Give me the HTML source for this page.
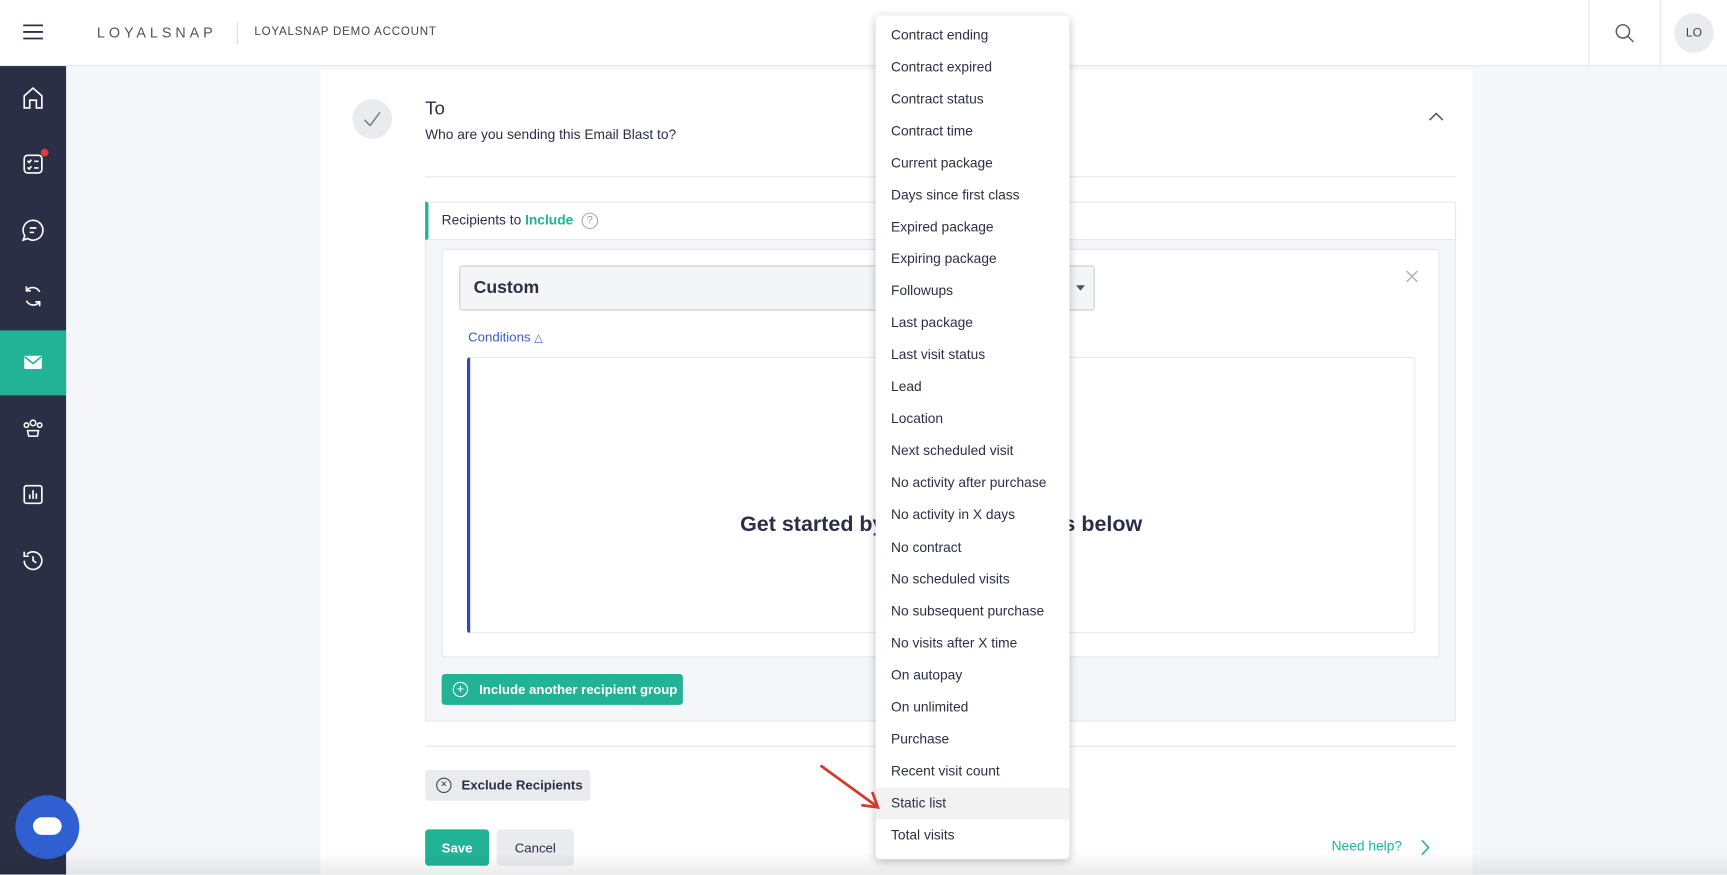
<!DOCTYPE html>
<html><head><meta charset="utf-8"><style>
*{box-sizing:border-box;margin:0;padding:0}
html,body{width:1727px;height:875px;overflow:hidden;background:#f4f6f9}
#w{position:absolute;left:0;top:0;width:1568px;height:794px;transform:scale(1.10140);transform-origin:0 0;font-family:"Liberation Sans",sans-serif;color:#2b2f45;background:#f4f6f9}
.a{position:absolute}
.hdr{left:0;top:0;width:1568px;height:60px;background:#fff;border-bottom:1px solid #e3e6ec}
.side{left:0;top:60px;width:60px;height:734px;background:#2b2f45}
.ic{position:absolute;left:18px;width:24px;height:24px}
.card{left:291px;top:63px;width:1046px;height:731px;background:#fff}
.dd{left:795px;top:14px;width:176px;height:766px;background:#fff;border-radius:4px;box-shadow:0 2px 8px rgba(0,0,0,.25);padding-top:4px}
.dd div{height:29.04px;line-height:29px;padding-left:14px;font-size:12.5px;color:#2b2f45}
.btn{border-radius:3px;font-size:12px;font-weight:bold;display:flex;align-items:center}
</style></head><body><div id="w">
<div class="a hdr">
 <svg class="a" style="left:21px;top:22px" width="18" height="14"><path d="M0 1H18M0 7H18M0 13H18" stroke="#2b2f45" stroke-width="1.6"/></svg>
 <div class="a" style="left:88px;top:22px;font-size:13px;letter-spacing:3.6px;color:#555">LOYALSNAP</div>
 <div class="a" style="left:215px;top:20px;width:1px;height:20px;background:#ddd"></div>
 <div class="a" style="left:231px;top:23px;font-size:10.5px;letter-spacing:0.7px;color:#444">LOYALSNAP DEMO ACCOUNT</div>
 <div class="a" style="left:1442px;top:0;width:1px;height:60px;background:#e6e6e6"></div>
 <svg class="a" style="left:1466px;top:21px" width="18" height="18"><circle cx="7.5" cy="7.5" r="6" fill="none" stroke="#555" stroke-width="1.3"/><path d="M12 12L17 17" stroke="#555" stroke-width="1.3"/></svg>
 <div class="a" style="left:1507px;top:0;width:1px;height:60px;background:#e6e6e6"></div>
 <div class="a" style="left:1520px;top:12px;width:36px;height:36px;border-radius:50%;background:#e9ebee;font-size:11px;line-height:36px;text-align:center;color:#444">LO</div>
</div>
<div class="a side">
 <svg class="ic" style="top:17px" viewBox="0 0 24 24" fill="none" stroke="#fff" stroke-width="1.5"><path d="M4 10L12 3L20 10V21H15V14H9V21H4Z"/></svg>
 <svg class="ic" style="top:77px" viewBox="0 0 24 24" fill="none" stroke="#fff" stroke-width="1.5"><rect x="4" y="4" width="16" height="16" rx="3"/><path d="M7 9L8.5 10.5L10.5 8M13 9.5H17M7 15L8.5 16.5L10.5 14M13 15.5H17"/></svg>
 <div class="a" style="left:37px;top:75px;width:7px;height:7px;border-radius:50%;background:#e03a3a"></div>
 <svg class="ic" style="top:137px" viewBox="0 0 24 24" fill="none" stroke="#fff" stroke-width="1.5"><path d="M12 3A9 9 0 1 1 7 19.5L3 21L4.5 17A9 9 0 0 1 12 3Z"/><path d="M9 10H15M9 14H13"/></svg>
 <svg class="ic" style="top:197px" viewBox="0 0 24 24" fill="none" stroke="#fff" stroke-width="1.5"><path d="M18 8A7 7 0 0 0 6 7M6 16A7 7 0 0 0 18 17M6 3V7H10M18 21V17H14"/></svg>
 <div class="a" style="left:0;top:240px;width:60px;height:59px;background:#22b396"></div>
 <svg class="ic" style="top:257px" viewBox="0 0 24 24"><rect x="4" y="6" width="16" height="12" rx="1.5" fill="#fff"/><path d="M4.5 7L12 13L19.5 7" stroke="#22b396" stroke-width="1.5" fill="none"/></svg>
 <svg class="ic" style="top:317px" viewBox="0 0 24 24" fill="none" stroke="#fff" stroke-width="1.4"><circle cx="12" cy="7" r="2.5"/><circle cx="6" cy="9" r="2"/><circle cx="18" cy="9" r="2"/><path d="M7 14H17L16 19H8Z"/></svg>
 <svg class="ic" style="top:377px" viewBox="0 0 24 24" fill="none" stroke="#fff" stroke-width="1.5"><rect x="4" y="4" width="16" height="16" rx="2"/><path d="M9 16V12M12 16V8M15 16V11"/></svg>
 <svg class="ic" style="top:437px" viewBox="0 0 24 24" fill="none" stroke="#fff" stroke-width="1.5"><path d="M4 12A8 8 0 1 0 6.5 6.2M4 4V8H8M12 8V12L15 14"/></svg>
</div>
<div class="a" style="left:14px;top:722px;width:58px;height:58px;border-radius:50%;background:#2f5fd0"><div class="a" style="left:16px;top:20px;width:26px;height:16px;border-radius:8px;background:#fff"></div></div>
<div class="a card">
 <div class="a" style="left:29px;top:27px;width:36px;height:36px;border-radius:50%;background:#e9ebee"></div>
 <svg class="a" style="left:38px;top:37px" width="18" height="16"><path d="M2 9L7 14L16 2" stroke="#777" stroke-width="1.3" fill="none"/></svg>
 <div class="a" style="left:95px;top:26px;font-size:17px;font-weight:500">To</div>
 <div class="a" style="left:95px;top:52px;font-size:12.5px">Who are you sending this Email Blast to?</div>
 <svg class="a" style="left:1006px;top:38px" width="14" height="9"><path d="M1 8L7 2L13 8" stroke="#555" stroke-width="1.4" fill="none"/></svg>
 <div class="a" style="left:95px;top:97px;width:936px;height:1px;background:#e3e6ec"></div>
 <div class="a" style="left:95px;top:120px;width:936px;height:472px;border:1px solid #e3e6ec;background:#f4f6f9">
  <div class="a" style="left:-1px;top:-1px;width:936px;height:35px;background:#fff;border:1px solid #e3e6ec;border-left:3px solid #22b396"></div>
  <div class="a" style="left:14px;top:9px;font-size:12.5px">Recipients to <b style="color:#22b396">Include</b></div>
  <div class="a" style="left:141px;top:9px;width:15px;height:15px;border-radius:50%;border:1px solid #aaa;font-size:10px;text-align:center;line-height:13px;color:#999">?</div>
  <div class="a" style="left:14px;top:42px;width:906px;height:371px;background:#fff;border:1px solid #e3e6ec;border-radius:3px">
   <div class="a" style="left:15px;top:14px;width:577px;height:41px;background:#f4f5f7;border:1px solid #c9ccd2;border-radius:3px;font-size:16px;font-weight:bold;line-height:39px;padding-left:12px;color:#2b2f45">Custom</div>
   <div class="a" style="left:575px;top:32px;border-left:4px solid transparent;border-right:4px solid transparent;border-top:5px solid #555"></div>
   <svg class="a" style="left:874px;top:18px" width="12" height="12"><path d="M1 1L11 11M11 1L1 11" stroke="#aaa" stroke-width="1.2"/></svg>
   <div class="a" style="left:23px;top:72px;font-size:12px;color:#3b5bcc;font-weight:500">Conditions <span style="font-size:10px">△</span></div>
   <div class="a" style="left:22px;top:97px;width:861px;height:251px;border:1px solid #e3e6ec;border-left:3px solid #3047c4;border-radius:3px"></div>
   <div class="a" style="left:22px;top:238px;width:861px;text-align:center;font-size:19.5px;font-weight:bold">Get started by adding conditions below</div>
  </div>
  <div class="a btn" style="left:14px;top:428px;width:219px;height:28px;background:#22b396;color:#fff;padding-left:10px"><span style="display:inline-block;width:14px;height:14px;border:1.3px solid #fff;border-radius:50%;text-align:center;line-height:11px;font-weight:normal;margin-right:10px">+</span>Include another recipient group</div>
 </div>
 <div class="a" style="left:95px;top:614px;width:936px;height:1px;background:#e3e6ec"></div>
 <div class="a btn" style="left:95px;top:636px;width:150px;height:28px;background:#e9ebee;padding-left:10px;color:#2b2f45"><span style="display:inline-block;width:14px;height:14px;border:1.2px solid #444;border-radius:50%;text-align:center;line-height:11px;font-weight:normal;font-size:10px;margin-right:9px">×</span>Exclude Recipients</div>
 <div class="a btn" style="left:95px;top:690px;width:58px;height:33px;background:#22b396;color:#fff;justify-content:center">Save</div>
 <div class="a btn" style="left:160px;top:690px;width:70px;height:33px;background:#e9ebee;justify-content:center;font-weight:500">Cancel</div>
 <div class="a" style="left:918px;top:698px;font-size:12.5px;color:#22b396;font-weight:500">Need help?</div>
 <svg class="a" style="left:998px;top:699px" width="10" height="15"><path d="M2 1L8 7.5L2 14" stroke="#22b396" stroke-width="1.4" fill="none"/></svg>
</div>
<div class="a" style="left:0;top:774px;width:1568px;height:20px;background:linear-gradient(rgba(0,0,0,0),rgba(0,0,0,.08))"></div>
<div class="a dd">
<div>Contract ending</div><div>Contract expired</div><div>Contract status</div><div>Contract time</div><div>Current package</div><div>Days since first class</div><div>Expired package</div><div>Expiring package</div><div>Followups</div><div>Last package</div><div>Last visit status</div><div>Lead</div><div>Location</div><div>Next scheduled visit</div><div>No activity after purchase</div><div>No activity in X days</div><div>No contract</div><div>No scheduled visits</div><div>No subsequent purchase</div><div>No visits after X time</div><div>On autopay</div><div>On unlimited</div><div>Purchase</div><div>Recent visit count</div><div style="background:#f2f2f2">Static list</div><div>Total visits</div>
</div>
<svg class="a" style="left:740px;top:690px" width="62" height="50"><path d="M5 5L56 42M42 41L57 43L52 29" stroke="#d33a2c" stroke-width="2.5" fill="none"/></svg>
</div></body></html>
